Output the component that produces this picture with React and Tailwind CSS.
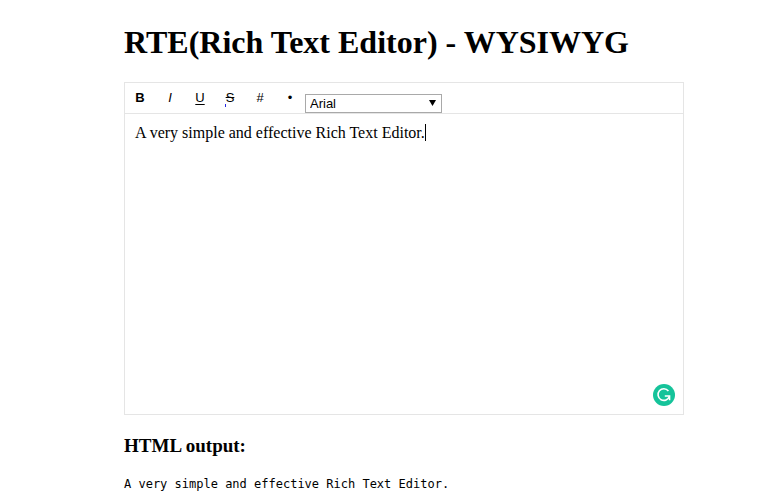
import { useState } from "react";

const TEXT = "A very simple and effective Rich Text Editor.";

const tools = [
  { label: "Bold", glyph: "B", style: "font-bold" },
  { label: "Italic", glyph: "I", style: "italic" },
  { label: "Underline", glyph: "U", style: "underline underline-offset-2" },
  { label: "Strikethrough", glyph: "S", style: "line-through", mark: true },
  { label: "Ordered list", glyph: "#", style: "" },
  { label: "Unordered list", glyph: "•", style: "" },
];

function ToolButton({ tool }) {
  return (
    <button type="button" aria-label={tool.label} className="relative h-[30px] w-[30px] text-center">
      <span className={tool.style}>{tool.glyph}</span>
      {tool.mark && <span className="absolute bottom-1.5 left-2.5 h-[3px] w-px bg-[#2a2ae0]" />}
    </button>
  );
}

function AssistantBadge() {
  return (
    <svg viewBox="0 0 22 22" className="absolute right-2 bottom-2 h-[22px] w-[22px]" aria-hidden="true">
      <circle cx="11" cy="11" r="11" fill="#15c39a" />
      <path d="M15.4 7A5.8 5.8 0 1 0 16.4 12.2" fill="none" stroke="#fff" strokeWidth="1.6" />
      <path d="M11.8 12h4.8v4.2" fill="none" stroke="#fff" strokeWidth="1.5" />
    </svg>
  );
}

export default function App() {
  const [font, setFont] = useState("Arial");
  return (
    <main className="bg-white pt-6 pr-[86px] pl-[124px] font-['Liberation_Serif',serif] text-black">
      <h1 className="text-[32px] leading-9 font-bold">RTE(Rich Text Editor) - WYSIWYG</h1>
      <section className="mt-[22px] border border-[#e5e5e5]">
        <div className="flex h-[31px] border-b border-[#e5e5e5] font-['Liberation_Sans',Arial,sans-serif] text-[13px]">
          {tools.map((tool) => (
            <ToolButton key={tool.label} tool={tool} />
          ))}
          <div className="relative w-[137px] self-end">
            <select
              aria-label="Font family"
              value={font}
              onChange={(e) => setFont(e.target.value)}
              className="block h-[19px] w-full appearance-none border border-[#a9a9a9] bg-white px-1 leading-4"
            >
              <option>Arial</option>
              <option>Georgia</option>
              <option>Verdana</option>
            </select>
            <svg viewBox="0 0 7 6" className="pointer-events-none absolute top-1.5 right-1.5 h-1.5 w-[7px]" aria-hidden="true">
              <path d="M0 0h7L3.5 6z" />
            </svg>
          </div>
        </div>
        <div className="relative">
          <div
            role="textbox"
            aria-label="Editor content"
            aria-multiline="true"
            contentEditable
            suppressContentEditableWarning
            className="h-[300px] p-[10px] text-base leading-[18px] outline-none"
          >
            {TEXT}
            <span className="inline-block h-[17px] w-px bg-black align-text-bottom" />
          </div>
          <AssistantBadge />
        </div>
      </section>
      <h3 className="mt-5 text-[19px] leading-[22px] font-bold">HTML output:</h3>
      <pre className="mt-5 font-['DejaVu_Sans_Mono',monospace] text-xs leading-[15px]">{TEXT}</pre>
    </main>
  );
}
